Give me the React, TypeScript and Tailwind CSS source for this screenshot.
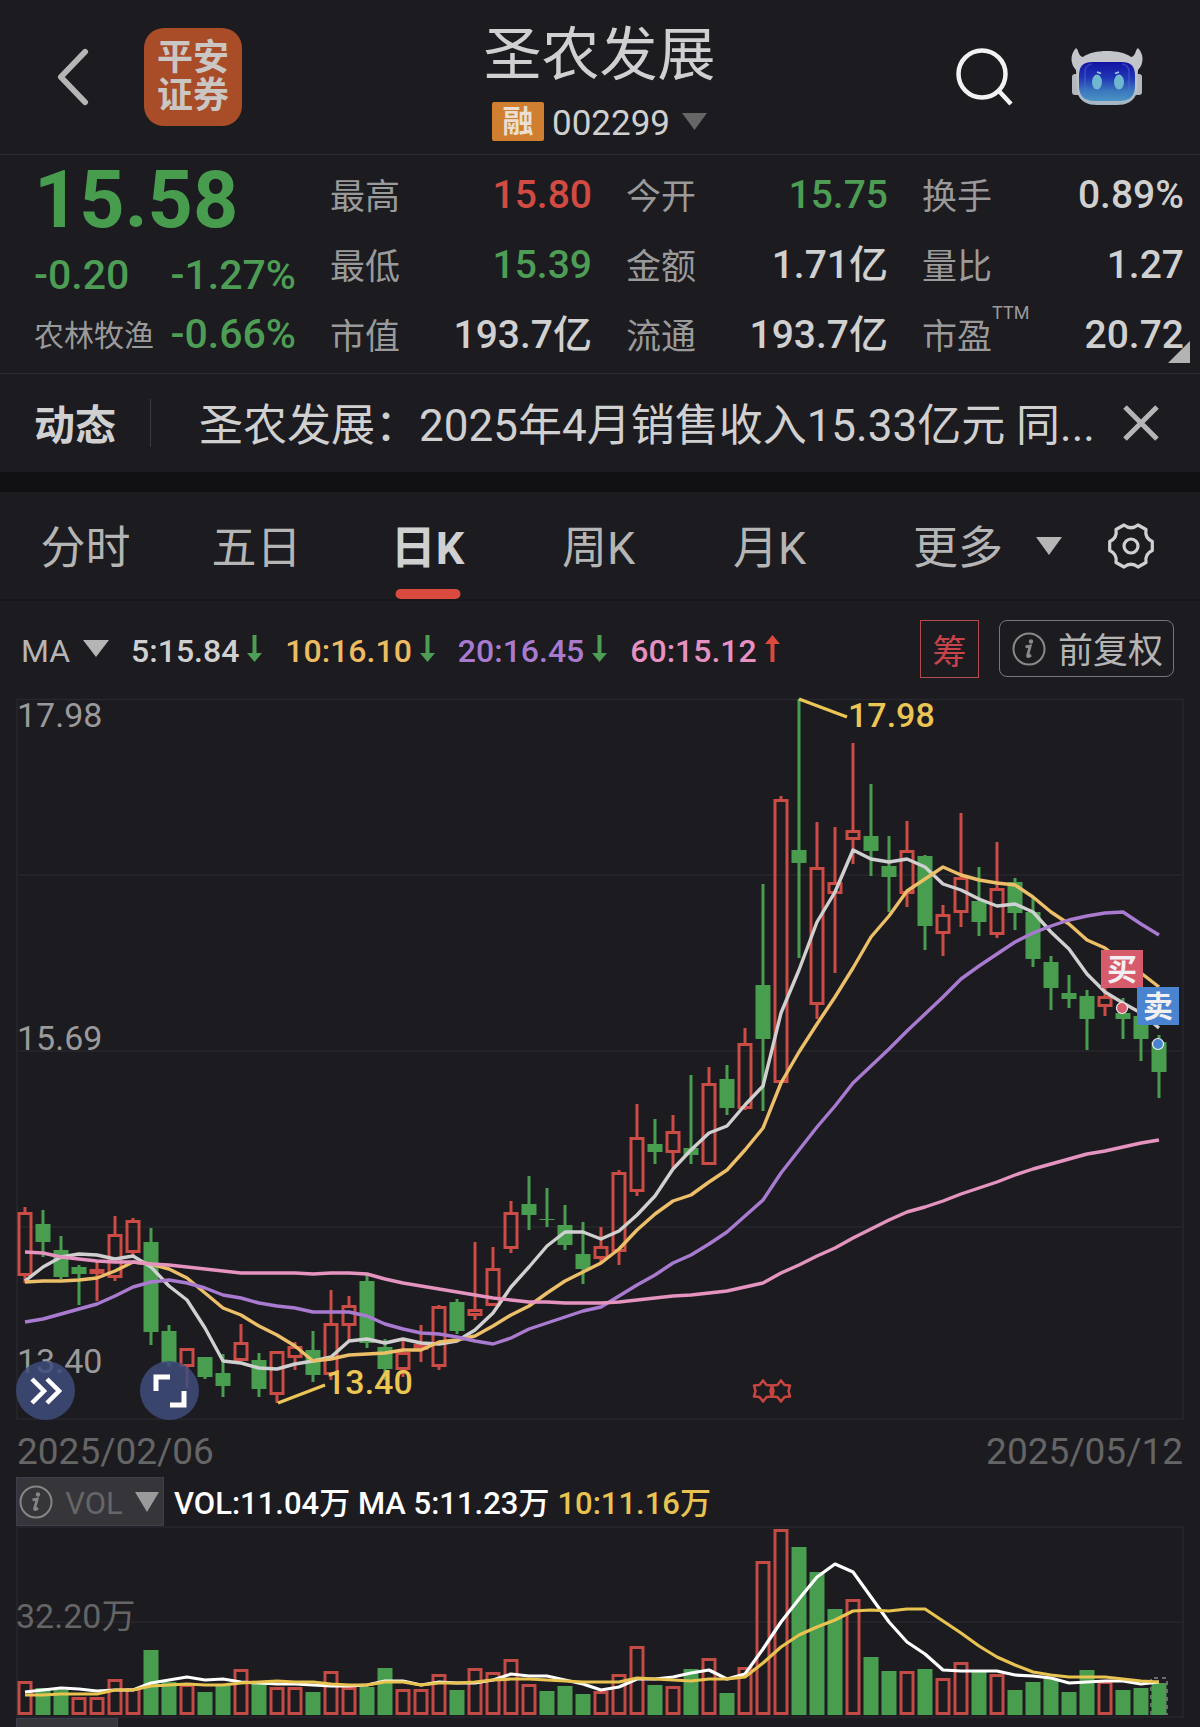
import { useState } from "react"

type Candle = [kind: "r" | "g", high: number, top: number, bottom: number, low: number]

const STEP = 18
const FIRST_X = 25

const candles: Candle[] = [
  ["r", 1207, 1212, 1276, 1283], ["g", 1210, 1224, 1242, 1257], ["g", 1236, 1250, 1277, 1279], ["g", 1265, 1267, 1274, 1305],
  ["r", 1262, 1269, 1274, 1301], ["r", 1216, 1234, 1278, 1281], ["r", 1218, 1220, 1253, 1258], ["g", 1228, 1242, 1332, 1345],
  ["g", 1325, 1331, 1363, 1367], ["r", 1348, 1348, 1367, 1388], ["g", 1357, 1357, 1377, 1379], ["g", 1354, 1373, 1386, 1397],
  ["r", 1324, 1342, 1361, 1361], ["g", 1353, 1360, 1389, 1397], ["r", 1351, 1351, 1395, 1403], ["r", 1342, 1346, 1358, 1370],
  ["g", 1331, 1350, 1375, 1382], ["r", 1290, 1323, 1375, 1380], ["r", 1296, 1305, 1326, 1340], ["g", 1275, 1281, 1343, 1348],
  ["g", 1339, 1347, 1369, 1380], ["r", 1340, 1352, 1370, 1377], ["r", 1325, 1344, 1350, 1362], ["r", 1305, 1306, 1367, 1370],
  ["g", 1299, 1302, 1331, 1334], ["r", 1242, 1309, 1316, 1320], ["r", 1247, 1268, 1306, 1306], ["r", 1201, 1212, 1249, 1253],
  ["g", 1176, 1204, 1215, 1230], ["g", 1188, 1219, 1220, 1227], ["g", 1205, 1225, 1245, 1250], ["g", 1222, 1254, 1269, 1284],
  ["r", 1227, 1246, 1259, 1263], ["r", 1170, 1172, 1252, 1265], ["r", 1104, 1137, 1192, 1196], ["g", 1119, 1144, 1152, 1164],
  ["r", 1115, 1131, 1153, 1168], ["g", 1075, 1148, 1155, 1164], ["r", 1067, 1083, 1165, 1165], ["g", 1065, 1079, 1108, 1115],
  ["r", 1028, 1043, 1109, 1110], ["g", 884, 985, 1039, 1111], ["r", 796, 799, 1083, 1083], ["g", 699, 850, 863, 958],
  ["r", 822, 867, 1005, 1019], ["r", 827, 882, 894, 973], ["r", 743, 830, 840, 864], ["g", 784, 836, 851, 876],
  ["g", 836, 866, 877, 912], ["r", 821, 850, 894, 907], ["g", 855, 856, 926, 950], ["r", 905, 914, 934, 956],
  ["r", 813, 877, 913, 927], ["g", 867, 901, 922, 936], ["r", 842, 888, 935, 938], ["g", 878, 882, 913, 930],
  ["g", 898, 912, 959, 967], ["g", 956, 962, 988, 1010], ["g", 975, 993, 999, 1008], ["g", 990, 996, 1019, 1050],
  ["r", 987, 996, 1007, 1016], ["g", 998, 1013, 1019, 1039], ["g", 1013, 1016, 1039, 1061], ["g", 1035, 1042, 1072, 1098],
]

const ma5 = [
  1281, 1267, 1257, 1254, 1255, 1259, 1256, 1267, 1286, 1300, 1328, 1361, 1363, 1368, 1369, 1364, 1361, 1357, 1341, 1339, 1343, 1339,
  1343, 1344, 1341, 1330, 1313, 1287, 1267, 1246, 1232, 1232, 1239, 1231, 1215, 1196, 1169, 1150, 1133, 1126, 1105, 1086, 1013, 970,
  922, 892, 850, 859, 862, 859, 867, 884, 890, 899, 906, 904, 912, 932, 949, 974, 992, 1003, 1013, 1028,
]
const ma10 = [
  1282, 1281, 1281, 1280, 1278, 1271, 1262, 1264, 1269, 1278, 1293, 1308, 1315, 1326, 1335, 1346, 1361, 1359, 1355, 1354, 1353, 1350,
  1350, 1342, 1340, 1336, 1326, 1315, 1306, 1293, 1281, 1272, 1263, 1249, 1230, 1214, 1201, 1195, 1182, 1170, 1150, 1128, 1083, 1052,
  1024, 997, 968, 937, 916, 891, 879, 867, 875, 880, 883, 885, 897, 912, 924, 940, 948, 962, 973, 987,
]
const ma20 = [
  1322, 1319, 1314, 1309, 1304, 1296, 1287, 1282, 1280, 1283, 1288, 1295, 1298, 1303, 1306, 1308, 1312, 1312, 1312, 1316, 1324, 1329,
  1333, 1334, 1337, 1341, 1344, 1338, 1329, 1323, 1317, 1311, 1307, 1296, 1285, 1275, 1263, 1255, 1244, 1232, 1216, 1200, 1173, 1150,
  1127, 1106, 1083, 1066, 1049, 1031, 1014, 997, 979, 966, 954, 942, 933, 926, 920, 916, 913, 912, 924, 935,
]
const ma60 = [
  1252, 1253, 1257, 1259, 1261, 1262, 1262, 1264, 1265, 1267, 1269, 1271, 1273, 1273, 1273, 1273, 1274, 1273, 1273, 1274, 1279, 1283,
  1286, 1289, 1292, 1295, 1298, 1300, 1302, 1302, 1303, 1303, 1303, 1302, 1300, 1298, 1296, 1295, 1293, 1291, 1287, 1283, 1273, 1265,
  1256, 1248, 1238, 1229, 1220, 1212, 1207, 1201, 1194, 1188, 1182, 1175, 1169, 1164, 1159, 1154, 1151, 1147, 1143, 1140,
]

const volumeTops = [
  1681, 1688, 1690, 1697, 1697, 1679, 1688, 1650, 1682, 1684, 1692, 1685, 1669, 1683, 1687, 1687, 1692, 1671, 1687, 1687, 1668, 1689,
  1689, 1674, 1690, 1668, 1672, 1659, 1684, 1691, 1686, 1694, 1691, 1674, 1646, 1685, 1686, 1669, 1658, 1693, 1667, 1561, 1529, 1547,
  1572, 1609, 1599, 1657, 1671, 1671, 1669, 1678, 1662, 1672, 1674, 1690, 1682, 1679, 1692, 1670, 1681, 1690, 1688, 1683,
]
const volumeKinds = "rggrrrrggrggrgrrgrrggrrrgrrrrgggrrrgrgrgrrrgggrggrgrrgrgggggrggg"

const vol5 = [
  1692, 1690, 1688, 1689, 1691, 1690, 1690, 1683, 1680, 1677, 1680, 1679, 1682, 1683, 1684, 1684, 1685, 1686, 1686, 1685, 1681, 1681,
  1685, 1682, 1683, 1683, 1680, 1674, 1676, 1676, 1680, 1684, 1690, 1687, 1679, 1679, 1677, 1673, 1670, 1679, 1674, 1649, 1622, 1599,
  1577, 1564, 1572, 1597, 1622, 1642, 1654, 1670, 1671, 1671, 1671, 1675, 1676, 1678, 1683, 1682, 1681, 1681, 1684, 1682,
]
const vol10 = [
  1695, 1695, 1694, 1694, 1694, 1690, 1690, 1686, 1685, 1684, 1685, 1685, 1683, 1682, 1681, 1682, 1682, 1684, 1685, 1685, 1682, 1682,
  1685, 1683, 1683, 1682, 1680, 1679, 1679, 1680, 1681, 1682, 1682, 1682, 1678, 1679, 1680, 1681, 1679, 1679, 1677, 1663, 1647, 1635,
  1627, 1620, 1611, 1610, 1611, 1609, 1609, 1621, 1633, 1646, 1657, 1665, 1672, 1675, 1677, 1677, 1677, 1679, 1681, 1682,
]

const toPoints = (ys: number[]) => ys.map((y, i) => `${FIRST_X + i * STEP},${y}`).join(" ")

const quoteColumns = [
  [
    { label: "最高", value: "15.80", color: "text-[#d24b43]" },
    { label: "最低", value: "15.39", color: "text-[#4d9d55]" },
    { label: "市值", value: "193.7亿", color: "text-[#d0d0d0]" },
  ],
  [
    { label: "今开", value: "15.75", color: "text-[#4d9d55]" },
    { label: "金额", value: "1.71亿", color: "text-[#d0d0d0]" },
    { label: "流通", value: "193.7亿", color: "text-[#d0d0d0]" },
  ],
  [
    { label: "换手", value: "0.89%", color: "text-[#d0d0d0]" },
    { label: "量比", value: "1.27", color: "text-[#d0d0d0]" },
    { label: "市盈", value: "20.72", color: "text-[#d0d0d0]", sup: "TTM" },
  ],
]

const averages = [
  { text: "5:15.84", color: "text-[#d0d0d0]", up: false },
  { text: "10:16.10", color: "text-[#ecbb62]", up: false },
  { text: "20:16.45", color: "text-[#a97bd0]", up: false },
  { text: "60:15.12", color: "text-[#e691c0]", up: true },
]

const tabs = ["分时", "五日", "日K", "周K", "月K"]

function Caret({ className }: { className: string }) {
  return (
    <svg viewBox="0 0 26 18" preserveAspectRatio="none" className={className} aria-hidden="true">
      <path d="M0 0H26L13 18Z" fill="currentColor" />
    </svg>
  )
}

function InfoIcon() {
  return (
    <svg viewBox="0 0 34 34" className="size-[34px] shrink-0" fill="none" stroke="currentColor" aria-hidden="true">
      <circle cx="17" cy="17" r="15.5" strokeWidth="2" />
      <circle cx="19" cy="9.5" r="2.2" fill="currentColor" stroke="none" />
      <path d="M13.5 14.8 L18.2 14 L15.6 23.5 Q15.2 25.8 19 23" strokeWidth="2.8" />
    </svg>
  )
}

function TrendArrow({ up }: { up: boolean }) {
  return (
    <svg viewBox="0 0 15 27" className={up ? "h-[27px] w-[15px] text-[#dc4a3d]" : "h-[27px] w-[15px] rotate-180 text-[#4d9d55]"} aria-hidden="true">
      <path d="M7.5 0L15 9H9.5V27H5.5V9H0Z" fill="currentColor" />
    </svg>
  )
}

function Robot() {
  return (
    <svg viewBox="0 0 72 58" className="h-[58px] w-[72px]" aria-hidden="true">
      <defs>
        <linearGradient id="visor" x1="0" y1="0" x2="0" y2="1">
          <stop offset="0" stopColor="#1212a4" />
          <stop offset="0.4" stopColor="#1f35b4" />
          <stop offset="0.75" stopColor="#3b79bd" />
          <stop offset="1" stopColor="#4a93c6" />
        </linearGradient>
        <linearGradient id="shell" x1="0" y1="0" x2="0" y2="1">
          <stop offset="0" stopColor="#c3c5c9" />
          <stop offset="0.7" stopColor="#bfc3c9" />
          <stop offset="1" stopColor="#a3b3c2" />
        </linearGradient>
      </defs>
      <rect x="1" y="26" width="9" height="21" rx="3" fill="#b4b8be" />
      <rect x="62" y="26" width="9" height="21" rx="3" fill="#b4b8be" />
      <path d="M5 0C8 2 7 8 12 9C22 1 50 1 60 9C65 8 64 2 67 0C73 6 73 16 67 22L66 44C63 54 55 57 46 57H26C17 57 9 54 6 44L5 22C-1 16 -1 6 5 0Z" fill="url(#shell)" />
      <path d="M22 14H50C60 14 64 18 64 28V38C64 48 59 53 48 53H24C13 53 8 48 8 38V28C8 18 12 14 22 14Z" fill="url(#visor)" />
      <path d="M14 42V24Q14 17 21 16M58 42V24Q58 17 51 16" fill="none" stroke="#5b72cf" strokeWidth="1.5" opacity="0.45" />
      <ellipse cx="26" cy="34" rx="5" ry="7.5" fill="#6eb7cf" />
      <ellipse cx="48" cy="34" rx="5" ry="7.5" fill="#6eb7cf" />
      <path d="M26 24L30 25.5M44 25.5L48 24" stroke="#a7c8ea" strokeWidth="1.8" fill="none" />
    </svg>
  )
}

function Header() {
  return (
    <header className="flex h-[155px] items-center border-b border-[#2d2c31]">
      <div className="flex flex-1 items-center gap-[55px] pl-[56px]">
        <button aria-label="返回" className="text-[#b5b5b5]">
          <svg viewBox="0 0 34 60" className="h-[60px] w-[33px]" fill="none" stroke="currentColor" strokeWidth="6" strokeLinecap="round" strokeLinejoin="round">
            <path d="M30 4L5 30L30 56" />
          </svg>
        </button>
        <div className="flex size-[98px] flex-col items-center justify-center rounded-[20px] bg-[#a94c28] text-[36px] leading-[38px] font-bold text-[#c9c6c4]">
          <span>平安</span>
          <span>证券</span>
        </div>
      </div>
      <div className="flex flex-col items-center pt-[10px]">
        <h1 className="text-[58px] leading-[64px] text-[#d0d0d0]">圣农发展</h1>
        <button className="mt-[14px] flex h-10 items-center text-[#d0d0d0]">
          <span className="flex h-[39px] w-[52px] items-center justify-center rounded-[2px] bg-[#cf7f2f] text-[31px] leading-none font-bold text-[#eadfd2]">融</span>
          <span className="ml-2 pt-1 text-[35px] leading-none">002299</span>
          <Caret className="ml-3 h-[17px] w-[25px] text-[#666666]" />
        </button>
      </div>
      <div className="flex flex-1 items-center justify-end gap-[57px] pr-[57px]">
        <button aria-label="搜索" className="text-[#f2f2f2]">
          <svg viewBox="0 0 58 58" className="size-[58px]" fill="none" stroke="currentColor" strokeWidth="4.5">
            <circle cx="26" cy="26" r="23.5" />
            <path d="M42 42L55 56" />
          </svg>
        </button>
        <button aria-label="智能助手">
          <Robot />
        </button>
      </div>
    </header>
  )
}

function Quote() {
  return (
    <section className="relative grid h-[219px] grid-cols-4 gap-x-[34px] border-b border-[#2d2c31] pt-[5px] pr-4 pl-[34px] leading-none">
      <div className="font-medium text-[#4d9d55]">
        <div className="flex h-20 items-center text-[79px] font-bold text-[#479c4e]">15.58</div>
        <div className="flex h-[70px] items-center justify-between text-[41px]">
          <span>-0.20</span>
          <span>-1.27%</span>
        </div>
        <div className="flex h-12 items-center justify-between text-[41px] whitespace-nowrap">
          <span className="pt-1 text-[30px] font-normal text-[#9a9a9a]">农林牧渔</span>
          <span>-0.66%</span>
        </div>
      </div>
      {quoteColumns.map((rows, i) => (
        <dl key={i}>
          {rows.map((row) => (
            <div key={row.label} className="flex h-[70px] items-center justify-between">
              <dt className="relative pt-1 text-[35px] text-[#9a9a9a]">
                {row.label}
                {row.sup && <span className="absolute -top-3 left-full text-[18px]">{row.sup}</span>}
              </dt>
              <dd className={`text-[39px] font-medium ${row.color}`}>{row.value}</dd>
            </div>
          ))}
        </dl>
      ))}
      <svg viewBox="0 0 22 22" className="absolute right-[10px] bottom-[10px] size-[22px]" aria-hidden="true">
        <path d="M22 0V22H0Z" fill="#b3b3b3" />
      </svg>
    </section>
  )
}

function News() {
  return (
    <section className="flex h-[98px] items-center pr-[41px] pl-[34px] text-[#d0d0d0]">
      <strong className="pt-1.5 text-[41px] leading-none font-bold">动态</strong>
      <span className="ml-[34px] h-12 w-px bg-[#3a3a42]" />
      <a href="#news" className="ml-12 flex-1 overflow-hidden pt-1.5 text-[44px] leading-[60px] whitespace-nowrap">
        圣农发展：2025年4月销售收入15.33亿元 同...
      </a>
      <button aria-label="关闭" className="ml-5 text-[#b5b5b5]">
        <svg viewBox="0 0 36 36" className="size-9" stroke="currentColor" strokeWidth="5">
          <path d="M2 2L34 34M34 2L2 34" />
        </svg>
      </button>
    </section>
  )
}

function PeriodTabs() {
  const [active, setActive] = useState("日K")
  return (
    <nav className="flex h-[109px] border-b-2 border-[#17171b] text-[45px] leading-none text-[#b5b5b5]">
      {tabs.map((tab) => (
        <button
          key={tab}
          onClick={() => setActive(tab)}
          className={tab === active ? "relative basis-[14.25%] pt-1.5 font-bold text-[#d0d0d0]" : "relative basis-[14.25%] pt-1.5"}
        >
          {tab}
          {tab === active && <span className="absolute bottom-0 left-1/2 h-[10px] w-[65px] -translate-x-1/2 rounded-full bg-[#db4a3f]" />}
        </button>
      ))}
      <div className="flex flex-1 items-center justify-between pr-[46px] pl-[58px]">
        <button className="flex items-center gap-[33px]">
          <span className="pt-1.5">更多</span>
          <Caret className="h-[18px] w-[26px]" />
        </button>
        <button aria-label="设置" className="text-[#d0d0d0]">
          <svg viewBox="0 0 46 46" className="size-[46px]" fill="none" stroke="currentColor" strokeWidth="3.2" strokeLinejoin="round">
            <path d="M16 2Q23 7.5 30 2L38 6.5Q36.500 15 44.300 18.500V27.500Q36.500 31 38 39.500L30 44Q23 38.500 16 44L8 39.500Q9.500 31 1.700 27.500V18.500Q9.500 15 8 6.500Z" />
            <circle cx="23" cy="23" r="7" />
          </svg>
        </button>
      </div>
    </nav>
  )
}

function AverageBar() {
  return (
    <div className="flex h-[95px] items-center pr-[26px] pl-[21px] leading-none">
      <button className="flex items-center gap-[13px] text-[32px] text-[#b5b5b5]">
        <span className="pt-1">MA</span>
        <Caret className="h-[17px] w-[26px]" />
      </button>
      <div className="ml-[22px] flex gap-[23px] text-[32px] font-medium">
        {averages.map((avg) => (
          <span key={avg.text} className={`flex items-center gap-2 ${avg.color}`}>
            <span className="pt-1">{avg.text}</span>
            <TrendArrow up={avg.up} />
          </span>
        ))}
      </div>
      <button className="ml-auto flex h-[58px] w-[59px] items-center justify-center border border-[#b5494c] pt-1.5 text-[34px] text-[#c8434a]">筹</button>
      <button className="ml-5 flex h-[57px] items-center gap-3 rounded-lg border border-[#77777a] pr-[10px] pl-3 text-[35px] text-[#b5b5b5]">
        <span className="text-[#8a8a8a]">
          <InfoIcon />
        </span>
        <span className="pt-1.5">前复权</span>
      </button>
    </div>
  )
}

function PriceChart() {
  return (
    <div className="relative">
      <svg viewBox="0 696 1200 724" className="block h-auto w-full">
        <g stroke="#27272d" strokeWidth="1.5" fill="none">
          <rect x="17" y="699.5" width="1166" height="719.5" />
          <path d="M17 875H1183M17 1051H1183M17 1227H1183" />
        </g>
        <g fill="#9a9a9a" fontSize="34">
          <text x="17" y="727">17.98</text>
          <text x="17" y="1050">15.69</text>
          <text x="17" y="1373">13.40</text>
        </g>
        {candles.map(([kind, high, top, bottom, low], i) => {
          const x = FIRST_X + i * STEP
          if (kind === "g") {
            return (
              <g key={i} fill="#489d4f">
                <rect x={x - 1.5} y={high} width="3" height={low - high} />
                <rect x={x - 7.5} y={top} width="15" height={bottom - top} />
              </g>
            )
          }
          return (
            <g key={i} stroke="#ca4c45" strokeWidth="3" fill="none">
              <path d={`M${x} ${high}V${top + 1}M${x} ${bottom - 1}V${low}`} />
              <rect x={x - 6} y={top + 1.5} width="12" height={bottom - top - 3} />
            </g>
          )
        })}
        <g fill="none" strokeWidth="3.4" strokeLinejoin="round">
          <polyline points={toPoints(ma5)} stroke="#d0d0d0" />
          <polyline points={toPoints(ma10)} stroke="#ecbf68" />
          <polyline points={toPoints(ma20)} stroke="#a97bd0" />
          <polyline points={toPoints(ma60)} stroke="#e594c0" />
          <path d="M799 699L847 717M278 1403L325 1385" stroke="#ecc654" />
        </g>
        <g fill="#ecc654" fontSize="34" fontWeight="500">
          <text x="848" y="727">17.98</text>
          <text x="326" y="1394">13.40</text>
        </g>
        <g fontSize="30" fontWeight="700" fill="#f4f0f2" textAnchor="middle">
          <rect x="1101" y="950" width="42" height="38" fill="#d65b6b" />
          <text x="1122" y="980">买</text>
          <rect x="1137" y="987" width="42" height="38" fill="#4a84d0" />
          <text x="1158" y="1017">卖</text>
        </g>
        <circle cx="1122" cy="1008" r="5.5" fill="#d65b6b" stroke="#eeeeee" strokeWidth="1.2" />
        <circle cx="1158" cy="1044" r="5.5" fill="#4a84d0" stroke="#eeeeee" strokeWidth="1.2" />
        <g fill="none" stroke="#c8453f" strokeWidth="2.6" strokeLinejoin="round">
          <path d="M763 1380.5L766.5 1385L772 1385.5L770.5 1391L772 1396.5L766.5 1397L763 1401.5L759.5 1397L754 1396.5L755.5 1391L754 1385.5L759.5 1385Z" />
          <path d="M781 1380.5L784.5 1385L790 1385.5L788.5 1391L790 1396.5L784.5 1397L781 1401.5L777.5 1397L772 1396.5L773.5 1391L772 1385.5L777.5 1385Z" />
        </g>
      </svg>
      <button aria-label="展开" className="absolute bottom-0 left-4 flex size-[59px] items-center justify-center rounded-full bg-[#404c7c]/85">
        <svg viewBox="0 0 32 28" className="h-7 w-8" fill="none" stroke="#fff" strokeWidth="4.5">
          <path d="M2 2L14 14L2 26M17 2L29 14L17 26" />
        </svg>
      </button>
      <button aria-label="全屏" className="absolute bottom-0 left-[140px] flex size-[59px] items-center justify-center rounded-full bg-[#404c7c]/85">
        <svg viewBox="0 0 34 34" className="size-[34px]" fill="none" stroke="#fff" strokeWidth="5">
          <path d="M3 17V3H17M31 17V31H17" />
        </svg>
      </button>
    </div>
  )
}

function VolumeChart() {
  return (
    <svg viewBox="0 1526 1200 192" className="block h-auto w-full">
      <g stroke="#27272d" strokeWidth="1.5" fill="none">
        <rect x="17" y="1527" width="1166" height="190" />
        <path d="M17 1622H1183" />
      </g>
      <text x="16" y="1628" fontSize="34" fill="#656565">32.20万</text>
      {volumeTops.map((top, i) => {
        const x = FIRST_X + i * STEP - 7.5
        return volumeKinds[i] === "g" ? (
          <rect key={i} x={x} y={top} width="15" height={1715 - top} fill="#489d4f" />
        ) : (
          <rect key={i} x={x + 1.5} y={top + 1.5} width="12" height={1712 - top} fill="none" stroke="#c24b46" strokeWidth="3" />
        )
      })}
      <path d="M1151 1715V1678H1167V1715" fill="none" stroke="#6c6c70" strokeWidth="2" strokeDasharray="4 4" />
      <g fill="none" strokeWidth="3.2" strokeLinejoin="round">
        <polyline points={toPoints(vol5)} stroke="#ffffff" />
        <polyline points={toPoints(vol10)} stroke="#e8c350" />
      </g>
    </svg>
  )
}

export default function App() {
  return (
    <main className="min-h-screen overflow-hidden bg-[#1c1b20] font-['Roboto','Noto_Sans_CJK_SC',sans-serif]">
      <Header />
      <Quote />
      <News />
      <div className="h-5 bg-[#111113]" />
      <PeriodTabs />
      <AverageBar />
      <PriceChart />
      <div className="flex h-[57px] items-center justify-between px-[17px] pt-1.5 text-[37px] leading-none text-[#656565]">
        <time>2025/02/06</time>
        <time>2025/05/12</time>
      </div>
      <div className="flex h-[49px] items-center pl-4 text-[31px] leading-none font-medium text-white">
        <button className="flex h-full w-[148px] items-center justify-between border border-[#3c404c] bg-[#36353a] pr-1 pl-[2px] font-normal text-[#666666]">
          <span className="text-[#858585]">
            <InfoIcon />
          </span>
          <span className="pt-1">VOL</span>
          <Caret className="h-5 w-6 text-[#9a9a9a]" />
        </button>
        <span className="ml-[10px] pt-1">VOL:11.04万 MA 5:11.23万</span>
        <span className="ml-2 pt-1 text-[#e8c350]">10:11.16万</span>
      </div>
      <VolumeChart />
      <div className="ml-4 h-[9px] w-[102px] border border-b-0 border-[#3c404c] bg-[#36353a]" />
    </main>
  )
}
